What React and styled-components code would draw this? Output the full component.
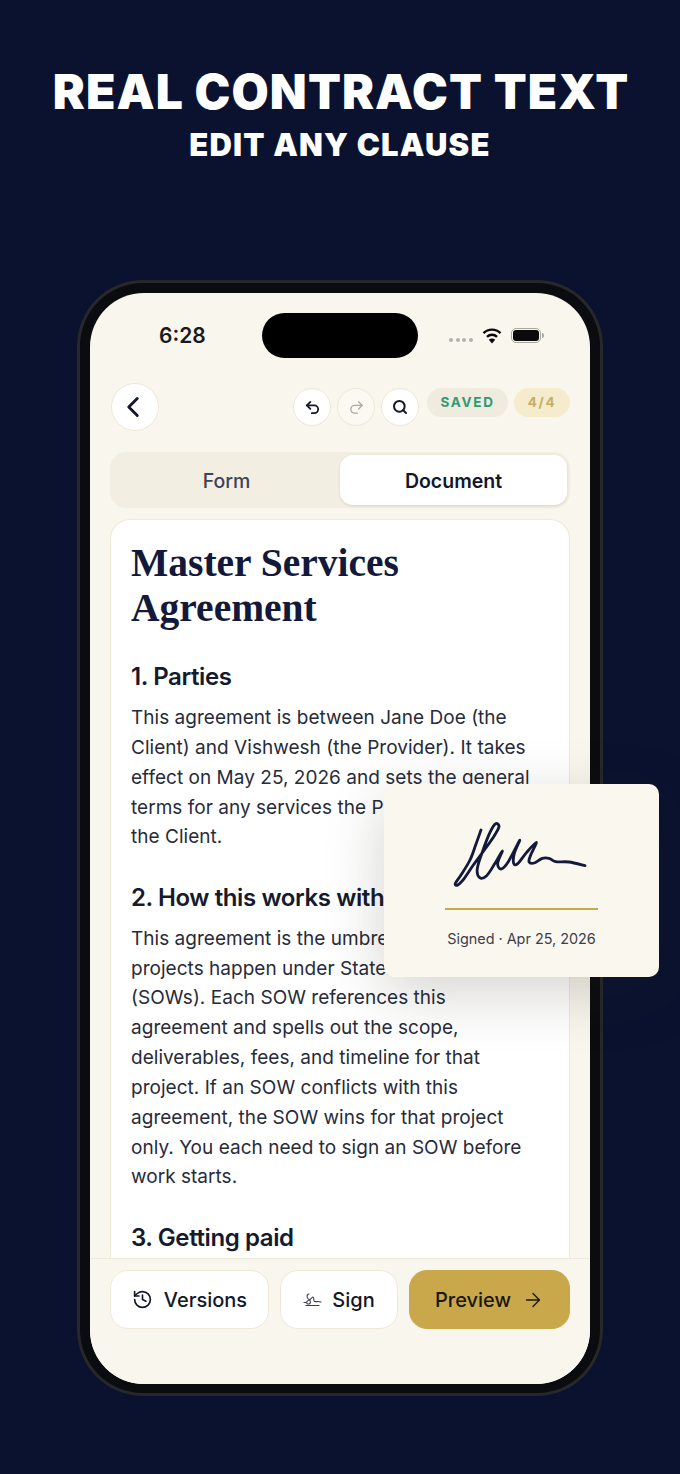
import React from "react";
import styled, { createGlobalStyle } from "styled-components";
import { ChevronLeft, Undo2, Redo2, Search, History, ArrowRight } from "lucide-react";

const Global = createGlobalStyle`
  html, body { margin: 0; padding: 0; background: #0a1230; }
  * { box-sizing: border-box; }
`;

const Page = styled.div`
  width: 680px;
  height: 1474px;
  overflow: hidden;
  background: #0a1230;
  font-family: Inter, "Liberation Sans", sans-serif;
  display: flex;
  flex-direction: column;
  align-items: center;
`;

const Title = styled.h1`
  margin: 62px 0 0 2px;
  height: 60px;
  line-height: 60px;
  font-size: 48px;
  font-weight: 900;
  letter-spacing: 1.1px;
  color: #fff;
  white-space: nowrap;
`;

const Subtitle = styled.h2`
  margin: 1px 0 0;
  height: 44px;
  line-height: 44px;
  font-size: 31px;
  font-weight: 900;
  letter-spacing: 1.2px;
  color: #fff;
  white-space: nowrap;
`;

const Phone = styled.div`
  position: relative;
  margin-top: 113px;
  width: 526px;
  height: 1116px;
  padding: 13px;
  border-radius: 66px;
  background: #0b0c10;
  box-shadow: inset 0 0 0 3px #26282c;
`;

const Screen = styled.div`
  width: 500px;
  height: 1091px;
  border-radius: 54px;
  overflow: hidden;
  background: #f9f6ed;
  display: flex;
  flex-direction: column;
`;

const StatusBar = styled.div`
  height: 90px;
  flex: none;
  display: flex;
  align-items: flex-start;
  padding: 20px 42px 0 69px;
`;

const Time = styled.span`
  width: 103px;
  margin-top: 9px;
  font-size: 21px;
  line-height: 28px;
  font-weight: 600;
  color: #1a1a1e;
`;

const Island = styled.div`
  width: 156px;
  height: 45px;
  border-radius: 23px;
  background: #000;
`;

const StatusIcons = styled.div`
  display: flex;
  align-items: center;
  margin-left: 31px;
  margin-top: 12px;
  height: 20px;
`;

const Dots = styled.div`
  display: flex;
  gap: 2.5px;
  margin-top: 10px;
  margin-right: 9px;
`;

const Dot = styled.span`
  width: 4px;
  height: 4px;
  border-radius: 50%;
  background: #b4b2ac;
`;

const Battery = styled.div`
  width: 30px;
  height: 15px;
  margin-left: 9px;
  border-radius: 5px;
  border: 1.5px solid #aaa99f;
  padding: 1px;
  display: flex;
  &::before {
    content: "";
    flex: 1;
    border-radius: 3px;
    background: #0b0b0b;
  }
`;

const Nub = styled.span`
  width: 2px;
  height: 5px;
  margin-left: 1px;
  border-radius: 0 2px 2px 0;
  background: #aaa99f;
`;

const Toolbar = styled.div`
  flex: none;
  display: flex;
  align-items: center;
  height: 48px;
  padding: 0 20px 0 21px;
`;

const BackButton = styled.button`
  width: 48px;
  height: 48px;
  padding: 0 4px 0 0;
  border-radius: 50%;
  border: 1px solid #efe8d8;
  background: #fff;
  color: #12172b;
  display: flex;
  align-items: center;
  justify-content: center;
  margin-right: auto;
`;

const ToolGroup = styled.div`
  display: flex;
  align-items: center;
  gap: 6px;
  margin-right: 8px;
`;

const ToolButton = styled.button`
  width: 38px;
  height: 38px;
  padding: 0;
  border-radius: 50%;
  border: 1px solid #efe8d8;
  background: ${p => (p.$off ? "#fbf9f2" : "#fff")};
  color: ${p => (p.$off ? "#a9a8a2" : "#12172b")};
  display: flex;
  align-items: center;
  justify-content: center;
`;

const Pill = styled.span`
  height: 29px;
  margin-top: -10px;
  width: ${p => p.$w}px;
  margin-left: ${p => p.$ml || 0}px;
  border-radius: 15px;
  background: ${p => p.$bg};
  color: ${p => p.$fg};
  font-size: 13.5px;
  font-weight: 700;
  letter-spacing: 1.7px;
  display: flex;
  align-items: center;
  justify-content: center;
`;

const Tabs = styled.div`
  flex: none;
  margin: 21px 20px 0;
  height: 56px;
  border-radius: 16px;
  background: #f3eee2;
  padding: 3px;
  display: flex;
`;

const Tab = styled.div`
  flex: ${p => (p.$active ? "0 0 227px" : "1")};
  padding-top: 2px;
  border-radius: 13px;
  background: ${p => (p.$active ? "#fff" : "transparent")};
  box-shadow: ${p => (p.$active ? "0 1px 3px rgba(90,70,30,.14)" : "none")};
  color: ${p => (p.$active ? "#12172b" : "#3d4254")};
  font-size: 19.5px;
  font-weight: ${p => (p.$active ? 600 : 500)};
  display: flex;
  align-items: center;
  justify-content: center;
`;

const Doc = styled.div`
  flex: 1;
  min-height: 0;
  margin: 11px 20px 0;
  border: 1px solid #f0e9d9;
  border-bottom: none;
  border-radius: 20px 20px 0 0;
  background: #fff;
  padding: 21px 20px 0;
  overflow: hidden;
`;

const DocTitle = styled.h1`
  margin: 0 0 30px;
  font-family: "Liberation Serif", serif;
  font-size: 39.5px;
  line-height: 45px;
  font-weight: 700;
  color: #12193a;
`;

const Heading = styled.h3`
  margin: 0 0 10px;
  font-size: 24px;
  line-height: 32px;
  font-weight: 560;
  letter-spacing: -0.4px;
  color: #151a2e;
  white-space: nowrap;
`;

const Para = styled.p`
  margin: 0 0 29.5px;
  font-size: 19px;
  letter-spacing: 0.03px;
  line-height: 29.85px;
  font-weight: 400;
  color: #272b3a;
  white-space: nowrap;
`;

const BottomBar = styled.div`
  flex: none;
  height: 126px;
  border-top: 1px solid #efe9da;
  background: #f9f6ed;
  padding: 11px 20px 0;
  display: flex;
  gap: 11px;
  align-items: flex-start;
`;

const ActionButton = styled.button`
  width: ${p => p.$w}px;
  height: 59px;
  padding: 0;
  border-radius: 18px;
  border: 1px solid ${p => (p.$primary ? "#c9a84c" : "#efe8d8")};
  background: ${p => (p.$primary ? "#c9a84c" : "#fff")};
  color: ${p => (p.$primary ? "#1a170d" : "#12172b")};
  font-family: Inter, sans-serif;
  font-size: 20px;
  font-weight: 500;
  display: flex;
  align-items: center;
  justify-content: center;
  gap: ${p => p.$gap || 11}px;
`;

const SignedCard = styled.div`
  position: absolute;
  left: 307px;
  top: 504px;
  width: 275px;
  height: 193px;
  border-radius: 10px;
  background: #faf7ee;
  box-shadow: 0 16px 60px rgba(40, 35, 20, 0.2);
  display: flex;
  flex-direction: column;
  align-items: center;
  padding-top: 31px;
`;

const SignatureArt = styled.svg`
  width: 150px;
  height: 80px;
  margin-left: -3px;
  flex: none;
`;

const SignLine = styled.div`
  width: 153px;
  height: 2px;
  margin-top: 13px;
  background: #c9a84c;
`;

const SignedText = styled.div`
  margin-top: 20px;
  font-size: 14.4px;
  line-height: 18px;
  color: #3a3d4b;
`;

const WifiIcon = () => (
  <svg width="20" height="17" viewBox="0 0 20 17">
    <path d="M1.5 6.2 A12 12 0 0 1 18.5 6.2" fill="none" stroke="#0b0b0b" strokeWidth="2.4" />
    <path d="M5 9.8 A7 7 0 0 1 15 9.8" fill="none" stroke="#0b0b0b" strokeWidth="2.4" />
    <path d="M10 16.5 L6.8 12.8 A4.4 4.4 0 0 1 13.2 12.8 Z" fill="#0b0b0b" />
  </svg>
);

const SignIcon = () => (
  <svg width="19" height="16" viewBox="0 0 19 16" fill="none" stroke="#3a3d4b" strokeWidth="1.1" strokeLinecap="round" strokeLinejoin="round">
    <path d="M6 2 C3.5 2 3.5 6 5.5 7 C8 8 8 12 5.5 12 C3 12 3 9 5.5 8.5 C8 7.5 9 5 10 5 C11.5 5 10 9 11.5 9.5 C13 10 15 9 18 10" />
    <path d="M1 10.5 H3 M3 13.5 H16" />
  </svg>
);

const SIGN_POINTS = [
  [108, 45], [92, 90], [75, 135], [48, 180], [31, 205], [38, 210], [58, 190], [85, 150],
  [118, 105], [148, 62], [162, 35], [152, 26], [136, 50], [116, 100], [97, 160], [104, 188],
  [125, 182], [150, 145], [172, 108], [158, 145], [168, 162], [190, 140], [224, 76], [208, 115],
  [206, 145], [218, 146], [245, 112], [274, 82], [258, 118], [252, 140], [268, 144], [292, 130],
  [312, 130], [332, 140], [372, 141], [420, 152],
];

const smoothPath = pts => {
  let d = `M${pts[0][0]} ${pts[0][1]}`;
  for (let i = 0; i < pts.length - 1; i++) {
    const a = pts[Math.max(i - 1, 0)];
    const b = pts[i];
    const c = pts[i + 1];
    const e = pts[Math.min(i + 2, pts.length - 1)];
    d += ` C${b[0] + (c[0] - a[0]) / 6} ${b[1] + (c[1] - a[1]) / 6} ${c[0] - (e[0] - b[0]) / 6} ${c[1] - (e[1] - b[1]) / 6} ${c[0]} ${c[1]}`;
  }
  return d;
};

export default function App() {
  return (
    <Page>
      <Global />
      <Title>REAL CONTRACT TEXT</Title>
      <Subtitle>EDIT ANY CLAUSE</Subtitle>
      <Phone>
        <Screen>
          <StatusBar>
            <Time>6:28</Time>
            <Island />
            <StatusIcons>
              <Dots><Dot /><Dot /><Dot /><Dot /></Dots>
              <WifiIcon />
              <Battery />
              <Nub />
            </StatusIcons>
          </StatusBar>
          <Toolbar>
            <BackButton><ChevronLeft size={34} strokeWidth={2} /></BackButton>
            <ToolGroup>
              <ToolButton><Undo2 size={17} strokeWidth={2.5} /></ToolButton>
              <ToolButton $off><Redo2 size={17} strokeWidth={1.9} /></ToolButton>
              <ToolButton><Search size={16} strokeWidth={3} /></ToolButton>
            </ToolGroup>
            <Pill $w={81} $bg="#f0ebdf" $fg="#2f9a74">SAVED</Pill>
            <Pill $w={56} $ml={6} $bg="#f5ebcd" $fg="#c9ad5e">4/4</Pill>
          </Toolbar>
          <Tabs>
            <Tab>Form</Tab>
            <Tab $active>Document</Tab>
          </Tabs>
          <Doc>
            <DocTitle>Master Services<br />Agreement</DocTitle>
            <Heading>1. Parties</Heading>
            <Para>
              This agreement is between Jane Doe (the<br />
              Client) and Vishwesh (the Provider). It takes<br />
              effect on May 25, 2026 and sets the general<br />
              terms for any services the Provider gives<br />
              the Client.
            </Para>
            <Heading>2. How this works with SOWs</Heading>
            <Para>
              This agreement is the umbrella. Individual<br />
              projects happen under Statements of Work<br />
              (SOWs). Each SOW references this<br />
              agreement and spells out the scope,<br />
              deliverables, fees, and timeline for that<br />
              project. If an SOW conflicts with this<br />
              agreement, the SOW wins for that project<br />
              only. You each need to sign an SOW before<br />
              work starts.
            </Para>
            <Heading>3. Getting paid</Heading>
          </Doc>
          <BottomBar>
            <ActionButton $w={159}><History size={21} strokeWidth={1.9} />Versions</ActionButton>
            <ActionButton $w={118} $gap={10}><SignIcon />Sign</ActionButton>
            <ActionButton $w={161} $primary>Preview<ArrowRight size={22} strokeWidth={1.5} /></ActionButton>
          </BottomBar>
        </Screen>
        <SignedCard>
          <SignatureArt viewBox="0 0 450 240">
            <path
              d={smoothPath(SIGN_POINTS)}
              fill="none"
              stroke="#12193a"
              strokeWidth="8.5"
              strokeLinecap="round"
              strokeLinejoin="round"
            />
          </SignatureArt>
          <SignLine />
          <SignedText>Signed · Apr 25, 2026</SignedText>
        </SignedCard>
      </Phone>
    </Page>
  );
}
